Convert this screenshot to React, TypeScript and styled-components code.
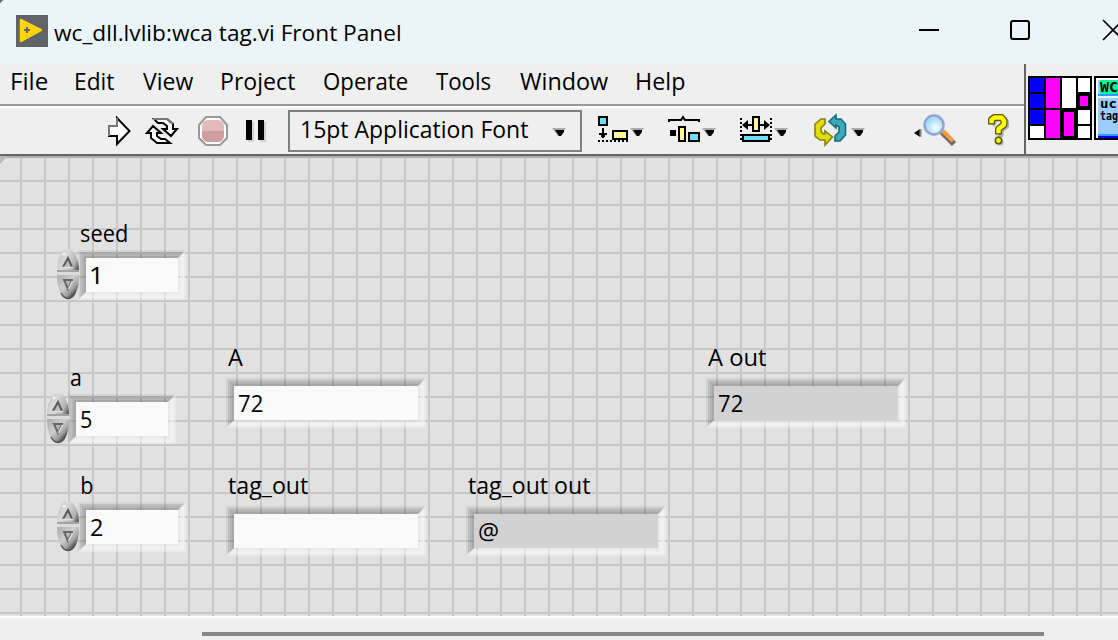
import React, { useLayoutEffect, useRef, useState } from 'react';
import styled, { createGlobalStyle } from 'styled-components';

const FONT = '"Open Sans", "Noto Sans", sans-serif';

const Global = createGlobalStyle`
  *, *::before, *::after { box-sizing: border-box; }
  body { margin: 0; background: #efefef; overflow: hidden; font-family: ${FONT}; color: #000; }
`;

/* ---------- text ---------- */

const TextBox = styled.span<{ $w: number }>`
  display: block;
  flex: none;
  width: ${(p) => p.$w}px;
  height: 32px;
`;

const TextInk = styled.span<{ $size: number }>`
  display: inline-block;
  font: ${(p) => p.$size}px/32px ${FONT};
  white-space: pre;
  transform-origin: 0 0;
`;

/* Condenses a caption so its glyphs span exactly the given width. */
function Text({ children, w, size = 23.5 }: { children: string; w: number; size?: number }) {
  const ref = useRef<HTMLSpanElement>(null);
  const [transform, setTransform] = useState('none');
  useLayoutEffect(() => {
    const ctx = document.createElement('canvas').getContext('2d');
    if (!ctx || !ref.current) return;
    ctx.font = `${size}px ${FONT}`;
    const m = ctx.measureText(children);
    const scale = w / (m.actualBoundingBoxRight + m.actualBoundingBoxLeft);
    setTransform(`scaleX(${scale}) translateX(${m.actualBoundingBoxLeft}px)`);
  }, [children, w, size]);
  return (
    <TextBox $w={w}>
      <TextInk ref={ref} $size={size} style={{ transform }}>
        {children}
      </TextInk>
    </TextBox>
  );
}

/* ---------- window frame ---------- */

const Window = styled.div`
  display: flex;
  flex-direction: column;
  width: 1118px;
  height: 640px;
  overflow: hidden;
  background: #efefef;
`;

const TitleBar = styled.header`
  flex: none;
  display: flex;
  height: 64px;
  padding-left: 16px;
  background: radial-gradient(circle at 12px 12px, #ebf4f6 14px, #666 15.5px) 0 0 / 10px 10px no-repeat #ebf4f6;
`;

const AppIcon = styled.svg`
  flex: none;
  width: 32px;
  height: 32px;
  margin: 15px 6px 0 0;
`;

const TitleText = styled.div`
  flex: 1;
  padding-top: 17px;
`;

const WindowButtons = styled.svg`
  flex: none;
  width: 204px;
  height: 64px;
`;

const Head = styled.div`
  flex: none;
  display: flex;
  height: 92px;
  border-bottom: 2px solid #666;
`;

const Bars = styled.div`
  display: flex;
  flex-direction: column;
  width: 1026px;
  border-right: 2px solid #666;
`;

const MenuBar = styled.nav`
  flex: none;
  display: flex;
  gap: 29px;
  height: 42px;
  padding: 1px 0 0 11.5px;
  border-bottom: 2px solid #999;
`;

const ToolBar = styled.div`
  flex: 1;
  display: flex;
  align-items: flex-start;
  border-top: 2px solid #fff;
`;

const Tool = styled.svg<{ $ml?: number }>`
  flex: none;
  height: 46px;
  margin-left: ${(p) => p.$ml ?? 0}px;
`;

const FontSelect = styled.div`
  flex: none;
  display: flex;
  justify-content: space-between;
  width: 294px;
  height: 42px;
  margin: 2px 0 0 20px;
  padding: 1px 14px 0 12px;
  border: 2px solid #808080;
`;

const Panes = styled.svg`
  flex: none;
  width: 92px;
  height: 90px;
`;

function Caret({ x = 0, y = 0 }: { x?: number; y?: number }) {
  return (
    <g transform={`translate(${x} ${y})`}>
      <path d="M0 0H14L8 8H6Z" fill="#aaa" />
      <path d="M3 2H12V4L9 8H7Z" fill="#000" />
    </g>
  );
}

/* ---------- front panel ---------- */

const Panel = styled.main`
  position: relative;
  flex: none;
  height: 460px;
  overflow: hidden;
  background-color: #e1e1e1;
  background-image: linear-gradient(135deg, #b8b8b8 5px, transparent 6px), linear-gradient(#b0b0b0, #b0b0b0),
    linear-gradient(#c8c8c8 2px, transparent 2px), linear-gradient(90deg, #c8c8c8 2px, transparent 2px);
  background-size: 8px 8px, 100% 2px, 24px 24px, 24px 24px;
  background-position: 0 0, 0 0, 0 0, 20px 0;
  background-repeat: no-repeat, no-repeat, repeat, repeat;
`;

const Placed = styled.div<{ $x: number; $y: number }>`
  position: absolute;
  left: ${(p) => p.$x}px;
  top: ${(p) => p.$y}px;
`;

const Ring = styled.div<{ $dark: number; $light: number }>`
  border: 2px solid;
  border-color: rgba(0, 0, 0, ${(p) => p.$dark}) rgba(255, 255, 255, ${(p) => p.$light})
    rgba(255, 255, 255, ${(p) => p.$light}) rgba(0, 0, 0, ${(p) => p.$dark});
`;

const Value = styled.div<{ $w: number; $grey?: boolean }>`
  width: ${(p) => p.$w}px;
  height: 34px;
  padding: 1px 0 0 5px;
  background: ${(p) => (p.$grey ? '#d2d2d2' : '#fafafa')};
`;

function Field({ w, grey, text, tw = 0 }: { w: number; grey?: boolean; text?: string; tw?: number }) {
  return (
    <Ring $dark={0.06} $light={0.3}>
      <Ring $dark={0.15} $light={0.55}>
        <Ring $dark={0.2} $light={0.5}>
          <Ring $dark={0.25} $light={0.3}>
            <Value $w={w} $grey={grey}>
              {text && <Text w={tw}>{text}</Text>}
            </Value>
          </Ring>
        </Ring>
      </Ring>
    </Ring>
  );
}

function Spinner() {
  return (
    <svg width="24" height="52" viewBox="0 0 24 52">
      <defs>
        <linearGradient id="knobUp" gradientUnits="userSpaceOnUse" x1="3" x2="24" y1="8" y2="17">
          <stop offset="0" stopColor="#cacaca" />
          <stop offset="0.3" stopColor="#dadada" />
          <stop offset="0.75" stopColor="#b4b4b4" />
          <stop offset="1" stopColor="#555" />
        </linearGradient>
        <linearGradient id="knobDown" gradientUnits="userSpaceOnUse" x1="3" x2="21" y1="30" y2="47">
          <stop offset="0" stopColor="#b4b4b4" />
          <stop offset="0.4" stopColor="#cecece" />
          <stop offset="0.7" stopColor="#a2a2a2" />
          <stop offset="1" stopColor="#222" />
        </linearGradient>
      </defs>
      <path d="M1 24C1 9 6 1 12 1S23 9 23 24Z" fill="url(#knobUp)" />
      <path d="M1 27C1 43 6 51 12 51S23 43 23 27Z" fill="url(#knobDown)" />
      <path d="M5 45Q8 50.500 12 50.500Q16 50.500 19 45" fill="none" stroke="#555" strokeWidth="1.500" />
      <circle cx="8" cy="6" r="1.500" fill="#f4f4f4" />
      <rect x="1" y="22" width="22" height="2" fill="#a4a4a4" />
      <rect x="0" y="24" width="24" height="3" fill="#dcdcdc" />
      <path d="M7 19L12 10L16 19" fill="#bbb" stroke="#5a5a5a" strokeWidth="2" />
      <path d="M7 19.500H17" stroke="#e0e0e0" strokeWidth="1.500" />
      <path d="M16 32L12 41L8 32H17" fill="#bbb" stroke="#666" strokeWidth="2" />
      <path d="M12.500 41L16.500 33" stroke="#e2e2e2" strokeWidth="1.500" />
    </svg>
  );
}

function NumericControl({ x, y, text, tw }: { x: number; y: number; text: string; tw: number }) {
  return (
    <>
      <Placed $x={x} $y={y}>
        <Field w={92} text={text} tw={tw} />
      </Placed>
      <Placed $x={x - 22} $y={y - 2}>
        <Spinner />
      </Placed>
    </>
  );
}

const Footer = styled.footer`
  flex: 1;
  padding: 14px 0 0 202px;
  border-top: 2px solid #fff;
`;

const ScrollThumb = styled.div`
  width: 842px;
  height: 4px;
  background: #868686;
`;

const MENUS: [string, number][] = [
  ['File', 35],
  ['Edit', 38],
  ['View', 50],
  ['Project', 73],
  ['Operate', 83],
  ['Tools', 55],
  ['Window', 88],
  ['Help', 48],
];

const LABELS: [string, number, number, number][] = [
  ['seed', 81, 61, 46],
  ['a', 71, 205, 10],
  ['b', 82, 313, 11],
  ['A', 228, 185, 15],
  ['tag_out', 228, 313, 80],
  ['tag_out out', 468, 313, 122],
  ['A out', 708, 185, 58],
];

export default function App() {
  return (
    <Window>
      <Global />
      <TitleBar>
        <AppIcon viewBox="0 0 32 32">
          <rect width="32" height="32" fill="#626366" />
          <path d="M5 5L25 15L5 26Z" fill="#ffd500" stroke="#ffd500" strokeWidth="2.5" strokeLinejoin="round" />
          <path d="M8 15H14M11 12V18" stroke="#626366" strokeWidth="2" />
        </AppIcon>
        <TitleText>
          <Text w={346} size={22.5}>wc_dll.lvlib:wca tag.vi Front Panel</Text>
        </TitleText>
        <WindowButtons viewBox="914 0 204 64" fill="none" stroke="#000" strokeWidth="2">
          <path d="M919 30H939" />
          <rect x="1011" y="21" width="18" height="18" rx="2" />
          <path d="M1103 20L1123 40M1123 20L1103 40" strokeWidth="1.6" />
        </WindowButtons>
      </TitleBar>
      <Head>
        <Bars>
          <MenuBar>
            {MENUS.map(([name, w]) => (
              <Text key={name} w={w}>{name}</Text>
            ))}
          </MenuBar>
          <ToolBar>
            {/* run */}
            <Tool $ml={106} width="28" viewBox="106 108 28 46">
              <path d="M109 126H117V118L129.500 131L117 144V136H109Z" fill="#fff" stroke="#000" strokeWidth="2" />
              <path d="M109 136V126H117V118" fill="none" stroke="#777" strokeWidth="2" />
            </Tool>
            {/* run continuously */}
            <Tool $ml={10} width="36" viewBox="144 108 36 46">
              <g fill="#fff" stroke="#000" strokeWidth="2">
                <path d="M154 119H167L173 124V129H177L171 136L163 129H167V126L163 123H158Z" />
                <path d="M170 143H157L151 138V133H147L153 126L161 133H157V136L161 139H165Z" />
              </g>
              <path d="M153 119H167L173 124" fill="none" stroke="#777" strokeWidth="2" />
            </Tool>
            {/* abort */}
            <Tool $ml={16} width="34" viewBox="196 108 34 46">
              <path d="M206 117H220L227 125V138L220 145H206L199 138V125Z" fill="#fff" stroke="#999" strokeWidth="2" />
              <rect x="202" y="120" width="22" height="22" rx="6" fill="#e3b9b9" />
              <path d="M202 131H224V136Q223 142 217 142H208Q202 141 202 136Z" fill="#cf9f9f" />
            </Tool>
            {/* pause */}
            <Tool $ml={14} width="24" viewBox="244 108 24 46">
              <path d="M248 122H254V142H248ZM260 122H266V142H260Z" fill="#d0d0d0" />
              <path d="M246 120H252V140H246ZM258 120H264V140H258Z" fill="#000" />
            </Tool>
            <FontSelect>
              <Text w={226}>15pt Application Font</Text>
              <svg width="14" height="36" viewBox="0 0 14 36">
                <Caret y={15} />
              </svg>
            </FontSelect>
            {/* align */}
            <Tool $ml={14} width="50" viewBox="596 108 50 46">
              <rect x="599" y="117" width="8" height="8" fill="#70dcf8" stroke="#000" strokeWidth="2" />
              <path d="M603 128V138M599 134H607M601 136H605" stroke="#000" strokeWidth="2" />
              <path d="M598 141H628" stroke="#000" strokeWidth="2" strokeDasharray="2 2" />
              <rect x="613" y="131" width="14" height="8" fill="#fbf895" stroke="#000" strokeWidth="2" />
              <Caret x={630} y={128} />
            </Tool>
            {/* distribute */}
            <Tool $ml={22} width="50" viewBox="668 108 50 46">
              <path d="M669 122V120H681L683 117L685 120H699V122" fill="none" stroke="#000" strokeWidth="2" />
              <rect x="670" y="130" width="6" height="6" fill="#000" />
              <rect x="679" y="127" width="6" height="14" fill="#fbf895" stroke="#000" strokeWidth="2" />
              <rect x="689" y="133" width="10" height="8" fill="#70dcf8" stroke="#000" strokeWidth="2" />
              <Caret x={702} y={128} />
            </Tool>
            {/* resize */}
            <Tool $ml={20} width="52" viewBox="738 108 52 46">
              <path d="M741 118V142M771 118V142" stroke="#000" strokeWidth="2" strokeDasharray="2 2" />
              <path d="M743 125H769" stroke="#000" strokeWidth="2" />
              <path d="M742 125L748 120V130ZM770 125L764 120V130Z" fill="#000" />
              <rect x="753" y="117" width="6" height="14" fill="#fbf895" stroke="#000" strokeWidth="2" />
              <rect x="743" y="135" width="26" height="6" fill="#70dcf8" stroke="#000" strokeWidth="2" />
              <Caret x={774} y={128} />
            </Tool>
            {/* reorder */}
            <Tool $ml={22} width="54" viewBox="812 108 54 46">
              <path d="M825 119H821L815 124V136L820 140H825V145L832.500 137L825 131V134H823L821 131V128L825 124Z" fill="#e0dc10" stroke="#85850c" strokeWidth="1.6" />
              <path d="M836 115L829 121.500L836 128V125L839 127V132L835 136V141H840L845.500 135V124L841 119H836Z" fill="#3fa9bd" stroke="#156c7c" strokeWidth="1.600" />
              <Caret x={851} y={128} />
            </Tool>
            {/* search */}
            <Tool $ml={46} width="48" viewBox="912 108 48 46">
              <defs>
                <radialGradient id="lens" cx="0.6" cy="0.65">
                  <stop offset="0" stopColor="#f4ffff" />
                  <stop offset="1" stopColor="#a9daf5" />
                </radialGradient>
              </defs>
              <path d="M914 133L920 129V137Z" fill="#000" />
              <path d="M920.500 129V137" stroke="#888" strokeWidth="2" />
              <path d="M942 132L954 144" stroke="#77675f" strokeWidth="6" />
              <path d="M943 131L953 141" stroke="#ee9d45" strokeWidth="4" />
              <circle cx="934" cy="125" r="9.500" fill="url(#lens)" stroke="#91a5cf" strokeWidth="2.500" />
            </Tool>
            {/* context help */}
            <Tool $ml={26} width="26" viewBox="986 108 26 46">
              <g fill="none" strokeLinejoin="round" strokeLinecap="square">
                <path d="M993.500 122.500L996 118.500H1003L1006 121.500V126L1000.500 130.500V134" stroke="#b0b0b0" strokeWidth="6" />
                <circle cx="1000" cy="142" r="3.500" fill="#b0b0b0" />
                <path d="M991.500 121V119.500L994.500 117.500H1001.500L1004 120.500V124.500L998.500 129V131" stroke="#55550a" strokeWidth="7" />
                <path d="M991.500 121V119.500L994.500 117.500H1001.500L1004 120.500V124.500L998.500 129V131" stroke="#ff0" strokeWidth="4.500" />
                <circle cx="998.500" cy="140.500" r="3.200" fill="#ff0" stroke="#55550a" strokeWidth="1.500" />
              </g>
            </Tool>
          </ToolBar>
        </Bars>
        {/* connector pane and VI icon */}
        <Panes viewBox="1026 64 92 90">
          <rect x="1028" y="76" width="64" height="64" fill="#000" />
          <path d="M1030 78h14v14h-14zM1030 94h14v14h-14zM1030 110h14v14h-14z" fill="#00f" />
          <path d="M1046 78h14v30h-14zM1046 110h14v28h-14zM1064 112h10v24h-10zM1080 96h8v10h-8z" fill="#f0f" />
          <path d="M1030 126h14v12h-14zM1062 78h14v30h-14zM1078 78h12v14h-12zM1078 110h12v14h-12zM1078 126h12v12h-12z" fill="#fff" />
          <rect x="1094" y="76" width="24" height="64" fill="#000" />
          <rect x="1096" y="78" width="22" height="60" fill="#fff" />
          <rect x="1098" y="80" width="20" height="58" fill="#99ccff" />
          <rect x="1100" y="80" width="18" height="14" fill="#00ff99" />
          <rect x="1098" y="94" width="20" height="2" fill="#3399ff" />
          <rect x="1098" y="96" width="20" height="2" fill="#e8ffff" />
          <rect x="1098" y="134" width="20" height="2" fill="#3399ff" />
          <rect x="1098" y="136" width="20" height="2" fill="#00f" />
          <g fontFamily="'DejaVu Sans Mono', monospace" fontWeight="bold">
            <text x="1100" y="92" fontSize="14" textLength="18" lengthAdjust="spacingAndGlyphs">WC</text>
            <text x="1100" y="108" fontSize="12" textLength="17" lengthAdjust="spacingAndGlyphs">uc</text>
            <text x="1100" y="120" fontSize="12" textLength="18" lengthAdjust="spacingAndGlyphs">tag</text>
          </g>
        </Panes>
      </Head>
      <Panel>
        {LABELS.map(([name, x, y, w]) => (
          <Placed key={name} $x={x} $y={y}>
            <Text w={w}>{name}</Text>
          </Placed>
        ))}
        <NumericControl x={78} y={94} text="1" tw={8} />
        <NumericControl x={68} y={238} text="5" tw={11} />
        <NumericControl x={78} y={346} text="2" tw={12} />
        <Placed $x={226} $y={222}>
          <Field w={184} text="72" tw={24} />
        </Placed>
        <Placed $x={226} $y={350}>
          <Field w={184} />
        </Placed>
        <Placed $x={466} $y={350}>
          <Field w={184} grey text="@" tw={19} />
        </Placed>
        <Placed $x={706} $y={222}>
          <Field w={184} grey text="72" tw={24} />
        </Placed>
      </Panel>
      <Footer>
        <ScrollThumb />
      </Footer>
    </Window>
  );
}
